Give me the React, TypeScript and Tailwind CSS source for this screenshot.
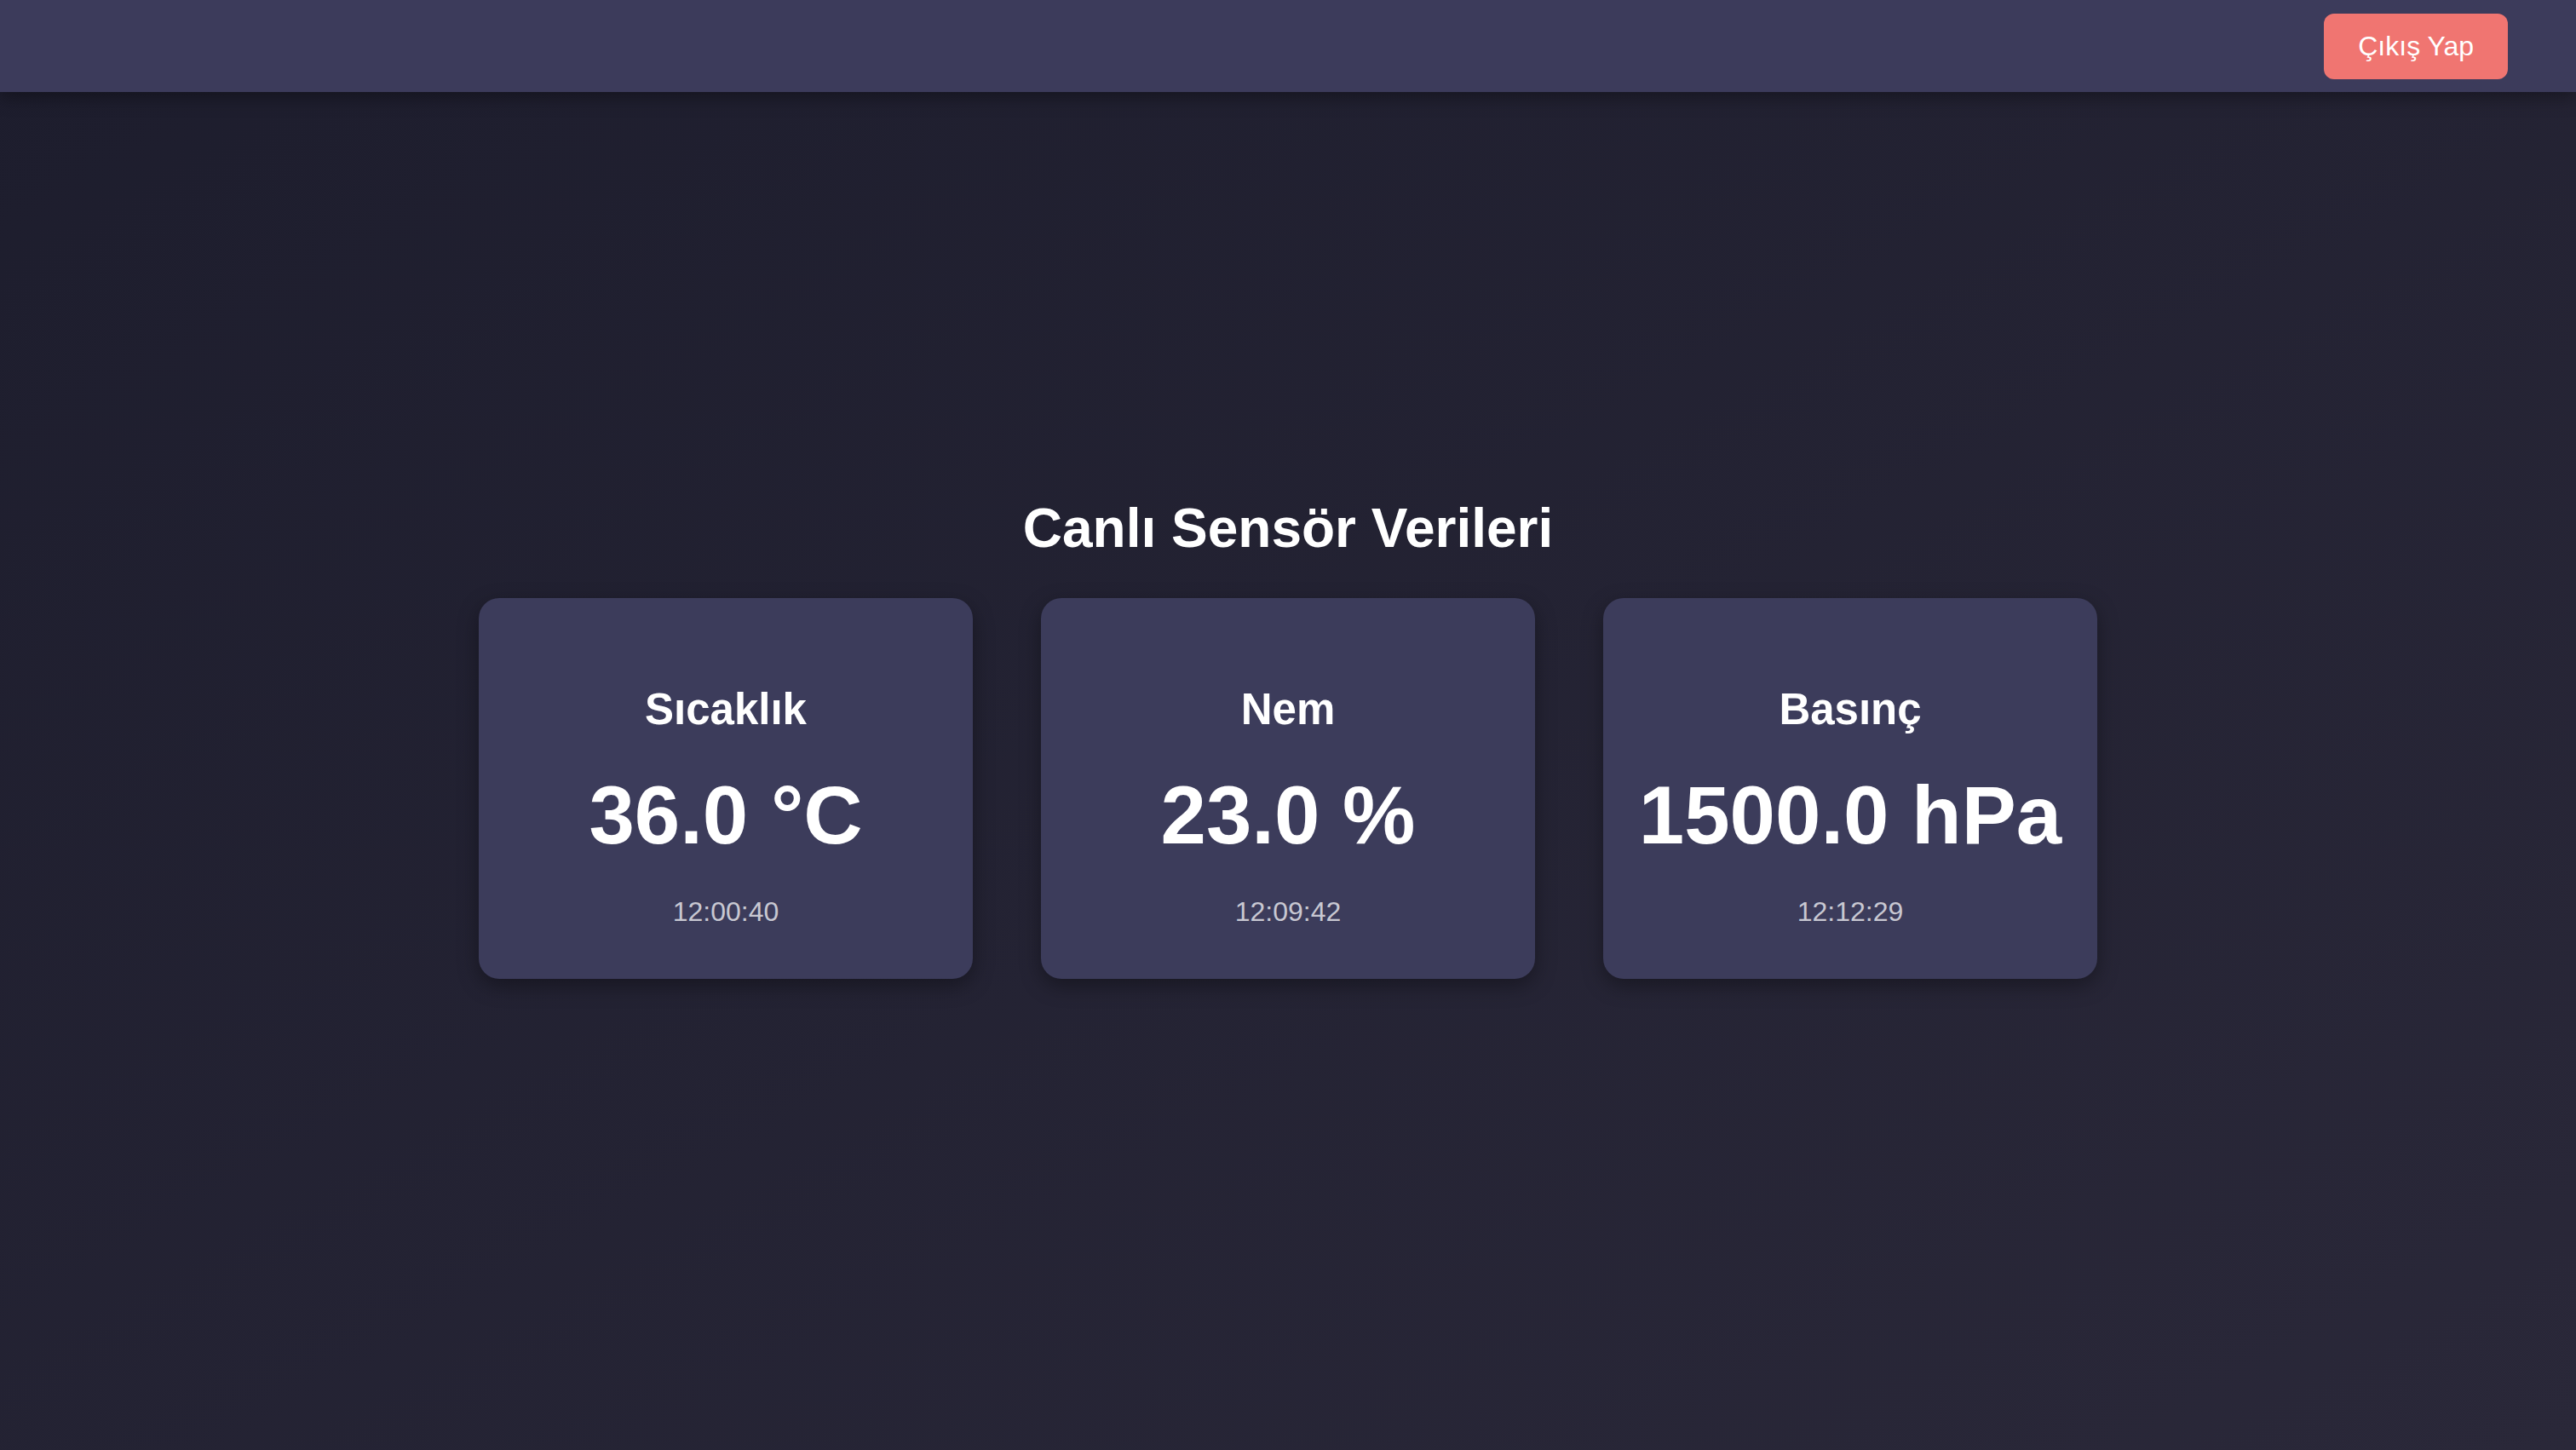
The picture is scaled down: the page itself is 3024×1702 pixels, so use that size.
const readings = [
  { label: 'Sıcaklık', value: '36.0 °C', time: '12:00:40' },
  { label: 'Nem', value: '23.0 %', time: '12:09:42' },
  { label: 'Basınç', value: '1500.0 hPa', time: '12:12:29' },
]

export default function App() {
  return (
    <div className="min-h-screen bg-linear-to-br from-[#1d1d2d] to-[#2a2839] font-['Liberation_Sans',Arial,sans-serif] text-white">
      <header className="h-[108px] bg-[#3c3b5b] flex items-center justify-end px-[80px] shadow-[0_6px_20px_rgba(0,0,0,0.35)] relative">
        <button className="bg-[#f07571] text-white text-[32px] leading-[37px] px-[40px] py-[20px] rounded-[12px]">
          Çıkış Yap
        </button>
      </header>

      <main className="flex flex-col items-center pt-[475px] pb-[100px]">
        <h2 className="text-[64px] leading-[74px] font-bold mb-[45px]">Canlı Sensör Verileri</h2>
        <div className="flex gap-[80px]">
          {readings.map(r => (
            <div
              key={r.label}
              className="w-[580px] bg-[#3c3c5b] rounded-[24px] shadow-[0_8px_24px_rgba(0,0,0,0.35)] flex flex-col items-center pt-[101px] pb-[60px] gap-[40px]"
            >
              <h3 className="text-[51px] leading-[59px] font-bold">{r.label}</h3>
              <div className="text-[96px] leading-[110px] font-bold">{r.value}</div>
              <div className="text-[32px] leading-[37px] text-[#c8c8d2]">{r.time}</div>
            </div>
          ))}
        </div>
      </main>
    </div>
  )
}
